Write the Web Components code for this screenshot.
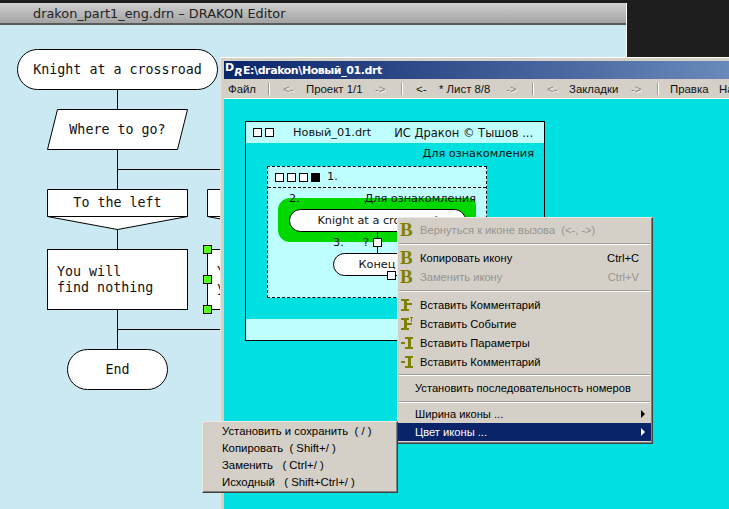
<!DOCTYPE html>
<html>
<head>
<meta charset="utf-8">
<title>DRAKON</title>
<style>
  html, body { margin: 0; height: 100%; overflow: hidden; background: #1e1e1e; }
</style>
</head>
<body>
<desk-top>
  <editor-window title-text="drakon_part1_eng.drn – DRAKON Editor">
    <flow-line x="117" y="89" h="20"></flow-line>
    <flow-line x="117" y="149" h="40"></flow-line>
    <flow-line x="117" y="169" w="110"></flow-line>
    <flow-line x="117" y="229" h="20"></flow-line>
    <flow-line x="117" y="309" h="40"></flow-line>
    <flow-line x="117" y="329" w="110"></flow-line>
    <flow-line x="207" y="249" h="60"></flow-line>
    <flow-node shape="pill" x="17" y="49" w="200" h="40">Knight at a crossroad</flow-node>
    <flow-node shape="para" x="47" y="109" w="140" h="40">Where to go?</flow-node>
    <flow-node shape="pent" x="47" y="189" w="140" h="40" >To the left</flow-node>
    <flow-node shape="pent" x="207" y="189" w="140" h="40"></flow-node>
    <flow-node shape="box" align="left" x="47" y="249" w="140" h="60">You will
find nothing</flow-node>
    <flow-node shape="box" align="left" x="207" y="249" w="140" h="60">You will
you</flow-node>
    <flow-node shape="pill" x="67" y="349" w="100" h="40">End</flow-node>
    <flow-handle x="207" y="249"></flow-handle>
    <flow-handle x="207" y="279"></flow-handle>
    <flow-handle x="207" y="309"></flow-handle>
  </editor-window>

  <drakon-window title-text="E:\drakon\Новый_01.drt">
    <drakon-menubar></drakon-menubar>
    <drakon-canvas></drakon-canvas>
  </drakon-window>

  <popup-menu x="397" y="217" w="256" pad="2px 1px 2px 0">
    <menu-item icon="b" disabled>Вернуться к иконе вызова&nbsp;&nbsp;(&lt;-, -&gt;)</menu-item>
    <menu-sep></menu-sep>
    <menu-item icon="b" hint="Ctrl+C">Копировать икону</menu-item>
    <menu-item icon="b" disabled hint="Ctrl+V">Заменить икону</menu-item>
    <menu-sep></menu-sep>
    <menu-item icon="i-r">Вставить Комментарий</menu-item>
    <menu-item icon="i-e">Вставить Событие</menu-item>
    <menu-item icon="i-l">Вставить Параметры</menu-item>
    <menu-item icon="i-l">Вставить Комментарий</menu-item>
    <menu-sep top="3" bottom="2"></menu-sep>
    <menu-item plain>Установить последовательность номеров</menu-item>
    <menu-sep bottom="2"></menu-sep>
    <menu-item plain arrow height="18">Ширина иконы ...</menu-item>
    <menu-item plain arrow active height="18">Цвет иконы ...</menu-item>
  </popup-menu>

  <popup-menu x="202" y="421" w="196" pad="0 0 2px 0">
    <menu-item sub>Установить и сохранить&nbsp; ( / )</menu-item>
    <menu-item sub>Копировать&nbsp; ( Shift+/ )</menu-item>
    <menu-item sub>Заменить&nbsp;&nbsp; ( Ctrl+/ )</menu-item>
    <menu-item sub>Исходный&nbsp;&nbsp; ( Shift+Ctrl+/ )</menu-item>
  </popup-menu>
</desk-top>

<script>
// small helper so every component is written the same way
function shadow(el, html) {
  el.attachShadow({ mode: 'open' });
  el.shadowRoot.innerHTML = html;
}

class DeskTop extends HTMLElement {
  constructor() {
    super();
    shadow(this, `<style>
      :host { display: block; position: relative; width: 729px; height: 509px; overflow: hidden; background: #1e1e1e; }
    </style><slot></slot>`);
  }
}

class EditorWindow extends HTMLElement {
  constructor() {
    super();
    shadow(this, `<style>
      :host { position: absolute; left: 0; top: 3px; width: 626px; height: 506px; display: flex; flex-direction: column; border-right: 1px solid #fff; }
      .bar { height: 20px; padding-left: 33px; display: flex; align-items: center; flex: none;
        background: linear-gradient(#cfcfcf, #a3a3a3); border-bottom: 2px solid #5a5a5a;
        font: 12.85px "DejaVu Sans", sans-serif; color: #222; }
      .sheet { flex: 1; position: relative; background: #cbe9f2; }
    </style>
    <div class="bar">${this.getAttribute('title-text')}</div>
    <div class="sheet"><slot></slot></div>`);
  }
}

// coordinates on the diagram are page based, the sheet starts at y=25
const SHEET_TOP = 25;

class FlowLine extends HTMLElement {
  constructor() {
    super();
    const x = +this.getAttribute('x'), y = +this.getAttribute('y') - SHEET_TOP;
    const w = +this.getAttribute('w') || 1, h = +this.getAttribute('h') || 1;
    shadow(this, `<style>
      :host { position: absolute; left: ${x}px; top: ${y}px; width: ${w}px; height: ${h}px; background: #000; }
    </style>`);
  }
}

class FlowHandle extends HTMLElement {
  constructor() {
    super();
    const x = +this.getAttribute('x') - 4, y = +this.getAttribute('y') - SHEET_TOP - 4;
    shadow(this, `<style>
      :host { position: absolute; left: ${x}px; top: ${y}px; width: 7px; height: 7px; background: #55ff1c; border: 1px solid #000; }
    </style>`);
  }
}

class FlowNode extends HTMLElement {
  constructor() {
    super();
    const x = +this.getAttribute('x'), y = +this.getAttribute('y') - SHEET_TOP;
    const w = +this.getAttribute('w'), h = +this.getAttribute('h');
    const shape = this.getAttribute('shape');
    const left = this.getAttribute('align') === 'left';
    let outline = '';
    let boxH = h;
    if (shape === 'pill') outline = `<rect x=".5" y=".5" width="${w}" height="${h}" rx="20" ry="20"/>`;
    if (shape === 'box') outline = `<rect x=".5" y=".5" width="${w}" height="${h}"/>`;
    if (shape === 'para') outline = `<path d="M10.5 .5H${w + .5}L${w - 9.5} ${h + .5}H.5Z"/>`;
    if (shape === 'pent') {
      boxH = 27;
      outline = `<path d="M.5 .5H${w + .5}V27.5L${w / 2 + .5} ${h + .5}L.5 27.5Z"/><path d="M.5 27.5H${w + .5}"/>`;
    }
    shadow(this, `<style>
      :host { position: absolute; left: ${x}px; top: ${y}px; width: ${w + 1}px; height: ${h + 1}px; }
      svg { position: absolute; inset: 0; }
      path, rect { fill: #fff; stroke: #000; stroke-width: 1; }
      .label { position: relative; height: ${boxH + 1}px; display: flex; align-items: center;
        justify-content: ${left ? 'flex-start' : 'center'}; padding-left: ${left ? 10 : 0}px; box-sizing: border-box;
        font: 13.33px/16px "DejaVu Sans Mono", monospace; color: #111; white-space: pre; }
    </style>
    <svg width="${w + 1}" height="${h + 1}">${outline}</svg>
    <div class="label"><span><slot></slot></span></div>`);
  }
}

class DrakonWindow extends HTMLElement {
  constructor() {
    super();
    shadow(this, `<style>
      :host { position: absolute; left: 220px; top: 57px; right: -2px; bottom: -2px; display: flex; flex-direction: column;
        background: #d4d0c8; border-top: 1px solid #fff; border-left: 1px solid #e8e6e1; padding: 3px 0 0 3px; box-sizing: border-box; }
      .title { height: 18px; flex: none; display: flex; align-items: center; gap: 1px;
        background: linear-gradient(90deg, #0a246a, #6a8abb); color: #fff;
        font: bold 11px "DejaVu Sans", sans-serif; letter-spacing: -.42px; white-space: nowrap; }
      .logo { width: 18px; height: 18px; flex: none; display: flex; box-sizing: border-box; padding: 1px 0 1px 1px; letter-spacing: 0; }
      .logo b { font: bold 11px/12px "DejaVu Sans", sans-serif; align-self: flex-start; }
      .logo i { font: italic bold 11px/10px "DejaVu Sans", sans-serif; align-self: flex-end; }
    </style>
    <div class="title"><span class="logo"><b>D</b><i>R</i></span><span>${this.getAttribute('title-text')}</span></div>
    <slot></slot>`);
  }
}

class DrakonMenubar extends HTMLElement {
  constructor() {
    super();
    const cell = (t, w, dim) => `<span style="width:${w}px" class="${dim ? 'dim' : ''}">${t}</span>`;
    const sep = (w) => `<span class="slot" style="width:${w}px"><i class="sep"></i></span>`;
    shadow(this, `<style>
      :host { display: flex; align-items: center; height: 20px; flex: none; padding-left: 4px; border-bottom: 1px solid #fff; box-sizing: border-box;
        font: 11.4px "Liberation Sans", sans-serif; color: #111; white-space: pre; overflow: hidden; }
      span { flex: none; }
      .dim { color: #85837d; text-shadow: 1px 1px 0 #f4f2ee; }
      .slot { display: flex; align-items: center; }
      .sep { width: 1px; height: 12px; background: #9c9a94; border-right: 1px solid #fff; }
    </style>
    ${cell('Файл', 40)}${sep(15)}${cell('&lt;-', 23, 1)}${cell('Проект 1/1', 69)}${cell('-&gt;', 26, 1)}${sep(15)}${cell('&lt;-', 23)}${cell('* Лист 8/8', 67)}${cell('-&gt;', 26, 1)}${sep(15)}${cell('&lt;-', 22, 1)}${cell('Закладки', 62)}${cell('-&gt;', 26, 1)}${sep(13)}${cell('Правка', 49)}${cell('На', 20)}`);
  }
}

class DrakonCanvas extends HTMLElement {
  constructor() {
    super();
    shadow(this, `<style>
      :host { display: block; position: relative; flex: 1; background: #00e0e0; font: 11.3px/14px "DejaVu Sans", sans-serif; color: #111; }
      .sq { display: inline-block; flex: none; width: 7px; height: 7px; border: 1px solid #000; background: #fff; margin-right: 3px; }
      .sq.on { background: #000; }
      .frame { position: absolute; left: 21px; top: 22px; width: 298px; height: 218px; border: 1px solid #000; display: flex; flex-direction: column; }
      .head { height: 21px; background: #bfffff; display: flex; align-items: center; padding-left: 7px; white-space: pre; }
      .head .name { margin-left: 16px; }
      .head .owner { margin-left: 23px; font-size: 11.5px; }
      .note { text-align: right; padding: 4px 10px 0 0; height: 23px; box-sizing: border-box; }
      .page { margin-left: 21px; width: 220px; height: 132px; border: 1px dashed #000; background: #bfffff; box-sizing: border-box; }
      .page-head { height: 20px; display: flex; align-items: center; padding-left: 7px; border-bottom: 1px dashed #000; white-space: pre; }
      .page-head .no { margin-left: 4px; }
      .spacer { flex: 1; }
      .foot { height: 21px; background: #bfffff; }
      .page-body { position: relative; }
      .green { position: absolute; left: 10px; top: 10px; width: 198px; height: 44px; background: #00d800; border-radius: 12px 7px 12px 12px; }
      .num { position: absolute; white-space: pre; }
      .pill { position: absolute; background: #fff; border: 1px solid #000; border-radius: 12px; box-sizing: border-box; display: flex; align-items: center; justify-content: center; }
      .wire { position: absolute; background: #000; width: 1px; }
      .tick { position: absolute; width: 7px; height: 7px; background: #fff; border: 1px solid #000; }
    </style>
    <div class="frame">
      <div class="head"><i class="sq"></i><i class="sq"></i><span class="name">Новый_01.drt</span><span class="owner">ИС Дракон © Тышов ...</span></div>
      <div class="note">Для ознакомления</div>
      <div class="page">
        <div class="page-head"><i class="sq"></i><i class="sq"></i><i class="sq"></i><i class="sq on"></i><span class="no">1.</span></div>
        <div class="page-body">
          <div class="green"></div>
          <span class="num" style="left:21px;top:4px">2.</span>
          <span class="num" style="right:10px;top:4px">Для ознакомления</span>
          <div class="pill" style="left:21px;top:21px;width:177px;height:23px">Knight at a crossroad</div>
          <div class="wire" style="left:109px;top:44px;height:22px"></div>
          <span class="num" style="left:65px;top:48px">3.</span>
          <span class="num" style="left:95px;top:48px">?</span>
          <div class="tick" style="left:105px;top:50px"></div>
          <div class="pill" style="left:65px;top:65px;width:88px;height:23px">Конец</div>
          <div class="tick" style="left:119px;top:83px"></div>
        </div>
      </div>
      <div class="spacer"></div>
      <div class="foot"></div>
    </div>`);
  }
}

class PopupMenu extends HTMLElement {
  constructor() {
    super();
    shadow(this, `<style>
      :host { position: absolute; left: ${this.getAttribute('x')}px; top: ${this.getAttribute('y')}px; width: ${this.getAttribute('w')}px;
        display: block; box-sizing: border-box; padding: ${this.getAttribute('pad')}; background: #d4d0c8;
        border: 1px solid; border-color: #ece9e4 #404040 #404040 #ece9e4; box-shadow: inset -1px -1px 0 #808080;
        font: 11.15px "Liberation Sans", sans-serif; color: #000; }
    </style><slot></slot>`);
  }
}

class MenuSep extends HTMLElement {
  constructor() {
    super();
    const top = this.getAttribute('top') || 4, bottom = this.getAttribute('bottom') || 3;
    shadow(this, `<style>
      :host { display: block; height: 2px; margin: ${top}px 1px ${bottom}px; background: #9c9a94; border-bottom: 1px solid #fff; box-sizing: border-box; }
    </style>`);
  }
}

const MENU_ICONS = {
  'b': `<span class="b">B</span>`,
  'i-r': `<svg width="12" height="13" viewBox="0 0 12 13" fill="#808000"><path d="M0 1h8v2H6v8h2v2H0v-2h3V3H0zM6 5h5v2H6z"/></svg>`,
  'i-e': `<svg width="12" height="13" viewBox="0 0 12 13" fill="#808000"><path d="M0 1h8v2H6v8h2v2H0v-2h3V3H0zM6 6h5v2H6zM9 0h3v1h-1v4h-1V1H9z"/></svg>`,
  'i-l': `<svg width="12" height="13" viewBox="0 0 12 13" fill="#808000"><path d="M4 1h8v2h-2v8h2v2H4v-2h3V3H4zM0 6h4v2H0z"/></svg>`
};

class MenuItem extends HTMLElement {
  constructor() {
    super();
    const icon = this.getAttribute('icon');
    const sub = this.hasAttribute('sub');
    const plain = this.hasAttribute('plain');
    const active = this.hasAttribute('active');
    const disabled = this.hasAttribute('disabled');
    const hint = this.getAttribute('hint') || '';
    const arrow = this.hasAttribute('arrow');
    const height = this.getAttribute('height') || (sub ? 17 : 19);
    shadow(this, `<style>
      :host { display: flex; align-items: center; height: ${height}px; white-space: pre;
        ${sub ? 'font-size: 11.35px;' : ''}
        ${active ? 'background: #0a246a; color: #fff;' : ''} ${disabled ? 'color: #96948e;' : ''} }
      .ic { flex: none; width: 17px; padding-left: 3px; display: flex; align-items: center; }
      svg { display: block; }
      .b { font: bold 19px/19px "Liberation Serif", serif; color: #808000; margin-left: -1px; }
      .txt { flex: 1; padding-left: ${sub ? 19 : plain ? 17 : 2}px; }
      .hint { padding-right: 12px; }
      .arr { width: 0; height: 0; border-left: 4px solid ${active ? '#fff' : '#000'}; border-top: 4px solid transparent; border-bottom: 4px solid transparent; margin-right: 6px; }
    </style>
    ${icon ? `<span class="ic">${MENU_ICONS[icon]}</span>` : ''}
    <span class="txt"><slot></slot></span>
    ${hint ? `<span class="hint">${hint}</span>` : ''}
    ${arrow ? '<i class="arr"></i>' : ''}`);
  }
}

customElements.define('desk-top', DeskTop);
customElements.define('editor-window', EditorWindow);
customElements.define('flow-line', FlowLine);
customElements.define('flow-handle', FlowHandle);
customElements.define('flow-node', FlowNode);
customElements.define('drakon-window', DrakonWindow);
customElements.define('drakon-menubar', DrakonMenubar);
customElements.define('drakon-canvas', DrakonCanvas);
customElements.define('popup-menu', PopupMenu);
customElements.define('menu-sep', MenuSep);
customElements.define('menu-item', MenuItem);
</script>
</body>
</html>
